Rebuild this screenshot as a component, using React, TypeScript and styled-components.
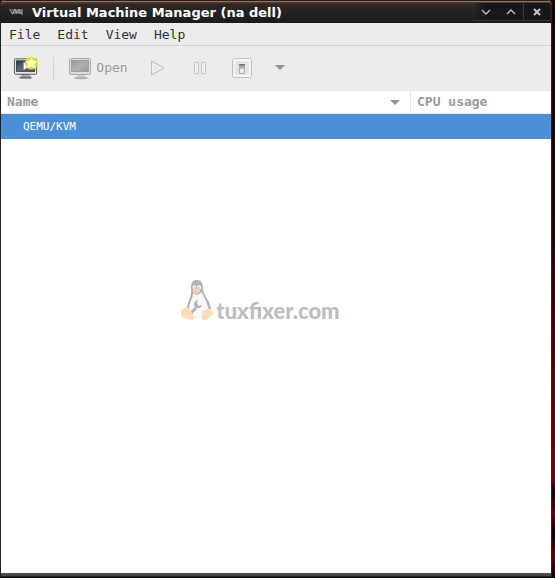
import React from "react";
import styled, { createGlobalStyle } from "styled-components";

const Global = createGlobalStyle`
  * { box-sizing: border-box; }
  body { margin: 0; background: #170000; }
  button { font: inherit; color: inherit; background: none; border: 0; padding: 0; margin: 0; }
  svg { display: block; }
`;

const mono = `"DejaVu Sans Mono", monospace`;

const Desktop = styled.div`
  display: flex;
  min-height: 100vh;
  padding: 0 3px 1px 0;
  background: linear-gradient(#210000 0%, #2a0000 40%, #5c0000 65%, #780000 83%, #160000 85%, #6a0000 89%, #0c0000 92%, #650000 96%, #0c0000 100%);
`;

const Window = styled.main`
  flex: 1;
  min-width: 0;
  display: flex;
  flex-direction: column;
  border-left: 1px solid #202022;
  border-right: 1px solid #202424;
  border-radius: 5px 5px 0 0;
  overflow: hidden;
  background: #fff;
`;

const TitleBar = styled.header`
  display: flex;
  align-items: center;
  height: 23px;
  padding-left: 7px;
  border-top: 1px solid #26211e;
  background: linear-gradient(#8a7566 0 1px, #5b351d 1px 2px, #37261b 3px, #292827 5px, #1b1b1b 100%);
`;

const Title = styled.h1`
  flex: 1;
  margin: 2px 0 0 8px;
  font: bold 13px/20px "DejaVu Sans", sans-serif;
  color: #fff;
  white-space: nowrap;
`;

const WindowControls = styled.div`
  display: flex;
  align-self: stretch;
  margin: 2px 1px 2px 0;
  border-bottom: 1px solid #343434;
  background: linear-gradient(90deg, #24242400, #171717 12px);
`;

const WindowButton = styled.button<{ $divided?: boolean }>`
  display: grid;
  place-items: center;
  width: ${(p) => (p.$divided ? 27 : 25)}px;
  border-left: 1px solid ${(p) => (p.$divided ? "#393939" : "transparent")};
`;

const MenuBar = styled.nav`
  display: flex;
  gap: 17px;
  height: 23px;
  padding: 0 8px;
  background: #ececec;
  border-bottom: 1px solid #d3d3d3;
  font: 13px/24px ${mono};
  color: #2e3436;
`;

const ToolBar = styled.div`
  display: flex;
  align-items: center;
  height: 45px;
  padding: 0 0 2px 12px;
  background: #ececec;
`;

const ToolButton = styled.button<{ $width: number }>`
  display: flex;
  align-items: center;
  justify-content: center;
  gap: 4px;
  width: ${(p) => p.$width}px;
  height: 32px;
  font: 13px/20px ${mono};
  color: #989b9b;
`;

const Separator = styled.div`
  width: 1px;
  height: 23px;
  margin: 2px 14px 0 13px;
  background: #d5d5d5;
`;

const MachineTable = styled.table`
  width: 100%;
  table-layout: fixed;
  border-collapse: separate;
  border-spacing: 0;
  font-family: ${mono};
`;

const Heading = styled.th<{ $last?: boolean }>`
  width: ${(p) => (p.$last ? "141px" : "auto")};
  height: 23px;
  padding: 0 10px 0 6px;
  border-bottom: 1px solid #eee;
  border-left: ${(p) => (p.$last ? "1px solid #e6e6e6" : "0")};
  font: bold 13px/22px ${mono};
  text-align: left;
  color: #979a9a;
`;

const SortButton = styled.button`
  display: flex;
  width: 100%;
  align-items: center;
  justify-content: space-between;
`;

const Cell = styled.td`
  height: 25px;
  padding: 0 0 0 22px;
  background: #4a90d9;
  color: #fff;
  font-size: 11px;
  line-height: 25px;
`;

const Canvas = styled.section`
  flex: 1;
  display: flex;
  justify-content: center;
  padding: 140px 0 0;
  margin-right: 32px;
`;

const Brand = styled.div`
  display: flex;
  align-items: flex-start;
  height: 46px;
  gap: 2px;
  color: #bdbdbd;
`;

const BrandName = styled.span`
  margin-top: 17px;
  font: 900 22px/30px Lato, sans-serif;
`;

const BottomEdge = styled.footer`
  height: 4px;
  background: linear-gradient(#4c4e4c, #4c4e4c 2px, #353635 3px, #111 4px);
`;

const AppLogo = () => (
  <svg width="16" height="12" viewBox="0 0 16 12" aria-hidden="true">
    <path d="M1 3h13v5H4z" fill="#777" opacity=".5" />
    <path d="M1.5 3l3 5 2.500-5" fill="none" stroke="#98807e" strokeWidth="1.300" />
    <path d="M5 8l2-5 2 4 2-4 2 5M8 8V4M11 8V4M14 3v6" fill="none" stroke="#aaa9a9" />
  </svg>
);

const Monitor = ({ fresh }: { fresh?: boolean }) => (
  <svg width={fresh ? 28 : 24} height="26" viewBox={fresh ? "0 0 28 26" : "0 0 24 26"} aria-hidden="true">
    <defs>
      <linearGradient id={fresh ? "screenNew" : "screenOpen"} x2="1" y2="1">
        <stop stopColor={fresh ? "#273648" : "#969ca4"} />
        <stop offset=".5" stopColor={fresh ? "#5f6b7a" : "#aab0b8"} />
        <stop offset="1" stopColor={fresh ? "#344456" : "#969da6"} />
      </linearGradient>
      <radialGradient id="glow"><stop offset=".55" stopColor="#e9e900" /><stop offset=".8" stopColor="#e9e628" stopOpacity=".8" /><stop offset="1" stopColor="#eeec50" stopOpacity="0" /></radialGradient>
    </defs>
    <ellipse cx="13" cy="23" rx="8" ry="1.5" fill="#aaa" opacity=".4" />
    <path d="M9 19h8v3h2v2H7v-2h2z" fill={fresh ? "#696b69" : "#b1b3b1"} />
    <path d="M9 20h8v2H9z" fill={fresh ? "#aaa" : "#ccc"} />
    <rect x="1.5" y="3.5" width={fresh ? 23 : 21} height="16" rx="1" fill={fresh ? "#e5e6e3" : "#dddeda"} stroke={fresh ? "#565856" : "#aaa"} />
    <rect x="3.500" y="5.500" width={fresh ? 19 : 17} height="11" fill={`url(#${fresh ? "screenNew" : "screenOpen"})`} stroke={fresh ? "#202a36" : "#8c939b"} strokeWidth=".7" />
    {fresh && <>
      <path d="M11 7l6 4-6 4z" fill="#fff" />
      <circle cx="19" cy="8" r="7.6" fill="url(#glow)" />
      <path d="M19 2.500l1.600 3.400 3.800.4-2.800 2.700.7 3.800-3.300-1.900-3.400 1.900.7-3.800-2.800-2.700 3.800-.4z" fill="#fff" stroke="#ffffc8" strokeWidth=".7" />
    </>}
  </svg>
);

const RunIcon = () => (
  <svg width="16" height="18" viewBox="0 0 16 18" aria-hidden="true">
    <path d="M1.5 2L14 9 1.5 16z" fill="#e9e9e9" stroke="#bdbdbd" strokeLinejoin="round" />
    <path d="M3 4.5L11.5 9 3 13.5z" fill="none" stroke="#f6f6f6" />
  </svg>
);

const PauseIcon = () => (
  <svg width="14" height="14" viewBox="0 0 14 14" aria-hidden="true">
    {[1.5, 8.5].map((x) => <g key={x}><rect x={x} y="1.5" width="4" height="11" rx=".5" fill="#e9e9e9" stroke="#c2c2c2" /><path d={`M${x + 1} 2.5h2v9h-2z`} fill="none" stroke="#f4f4f4" /></g>)}
  </svg>
);

const PowerIcon = () => (
  <svg width="20" height="20" viewBox="0 0 20 20" aria-hidden="true">
    <defs><linearGradient id="switch" y2="1" x2="0"><stop stopColor="#7e7e7e" /><stop offset=".45" stopColor="#c4c4c4" /><stop offset=".6" stopColor="#f2f2f2" /><stop offset="1" stopColor="#e8e8e8" /></linearGradient></defs>
    <rect x=".5" y=".5" width="19" height="19" rx="2" fill="#f5f5f4" stroke="#bfc0be" />
    <rect x="3" y="3" width="14" height="14" rx="2" fill="#e5e5e4" />
    <rect x="7.5" y="6.5" width="5" height="9" rx=".5" fill="url(#switch)" stroke="#aaa" />
    <path d="M7 6.500h6" stroke="#747474" />
  </svg>
);

const DownArrow = () => (
  <svg width="10" height="5" viewBox="0 0 10 5" aria-hidden="true"><path d="M0 0h10L5 5z" fill="#929595" /></svg>
);

const ControlIcon = ({ d, heavy }: { d: string; heavy?: boolean }) => (
  <svg width="10" height="10" viewBox="0 0 10 10" aria-hidden="true"><path d={d} fill="none" stroke="#c4c4be" strokeWidth={heavy ? 2 : 1.3} /></svg>
);

const Tux = () => (
  <svg width="34" height="43" viewBox="0 0 34 43" aria-hidden="true">
    <path d="M11 8c0-5 2-7 6-7s6 3 6 8c0 7 8 14 8 22 0 6-4 8-9 8H10c-4 0-5-6-3-12 2-7 5-10 4-19z" fill="#b2b3b3" />
    <path d="M13 14c3 3 6 2 9-1 1 5 6 10 6 17 0 8-5 9-10 9-7 0-10-3-9-9 0-6 4-10 4-16z" fill="#f8f8f8" />
    <ellipse cx="14.5" cy="8.5" rx="1.800" ry="2.200" fill="#f4f4f4" /><ellipse cx="19" cy="8.5" rx="2.200" ry="2.300" fill="#f4f4f4" />
    <circle cx="15" cy="9" r=".8" fill="#999" /><circle cx="18.6" cy="9" r=".8" fill="#999" />
    <path d="M12.500 12c1-3 5-3 8 0-2 4-6 4-8 0z" fill="#f6ce9e" />
    <path d="M10 35l6-6" fill="none" stroke="#b2b3b3" strokeWidth="3" />
    <path d="M18 21c-4 1-5 4-3 7 2 2 6 2 7-2l-3 1-2-3z" fill="#b2b3b3" />
    <path d="M6 28c-2 2-5 2-5 4v4c0 3 7 4 11 5 3-1 2-4 1-6-2-2-3-7-7-7z" fill="#fbddb7" />
    <path d="M23 31c0 4-3 8 0 10 4 2 6-3 10-5 2-2-2-3-2-6-2-2-5 2-8 1z" fill="#fbddb7" />
  </svg>
);

export default function App() {
  return (
    <>
      <Global />
      <Desktop>
        <Window>
          <TitleBar>
            <AppLogo />
            <Title>Virtual Machine Manager (na dell)</Title>
            <WindowControls>
              <WindowButton aria-label="Minimize"><ControlIcon d="M1 3l4 4 4-4" /></WindowButton>
              <WindowButton aria-label="Maximize"><ControlIcon d="M1 7l4-4 4 4" /></WindowButton>
              <WindowButton $divided aria-label="Close"><ControlIcon heavy d="M2 2l6 6M8 2L2 8" /></WindowButton>
            </WindowControls>
          </TitleBar>
          <MenuBar>
            {["File", "Edit", "View", "Help"].map((name) => <button key={name}>{name}</button>)}
          </MenuBar>
          <ToolBar>
            <ToolButton $width={27} aria-label="Create a new virtual machine"><Monitor fresh /></ToolButton>
            <Separator />
            <ToolButton $width={60} disabled><Monitor />Open</ToolButton>
            <ToolButton $width={60} disabled aria-label="Run"><RunIcon /></ToolButton>
            <ToolButton $width={24} disabled aria-label="Pause"><PauseIcon /></ToolButton>
            <ToolButton $width={60} disabled aria-label="Shut down"><PowerIcon /></ToolButton>
            <ToolButton $width={16} disabled aria-label="Shut down options"><DownArrow /></ToolButton>
          </ToolBar>
          <MachineTable>
            <thead>
              <tr>
                <Heading scope="col"><SortButton>Name<DownArrow /></SortButton></Heading>
                <Heading scope="col" $last>CPU usage</Heading>
              </tr>
            </thead>
            <tbody>
              <tr><Cell colSpan={2}>QEMU/KVM</Cell></tr>
            </tbody>
          </MachineTable>
          <Canvas>
            <Brand><Tux /><BrandName>tuxfixer.com</BrandName></Brand>
          </Canvas>
          <BottomEdge />
        </Window>
      </Desktop>
    </>
  );
}
